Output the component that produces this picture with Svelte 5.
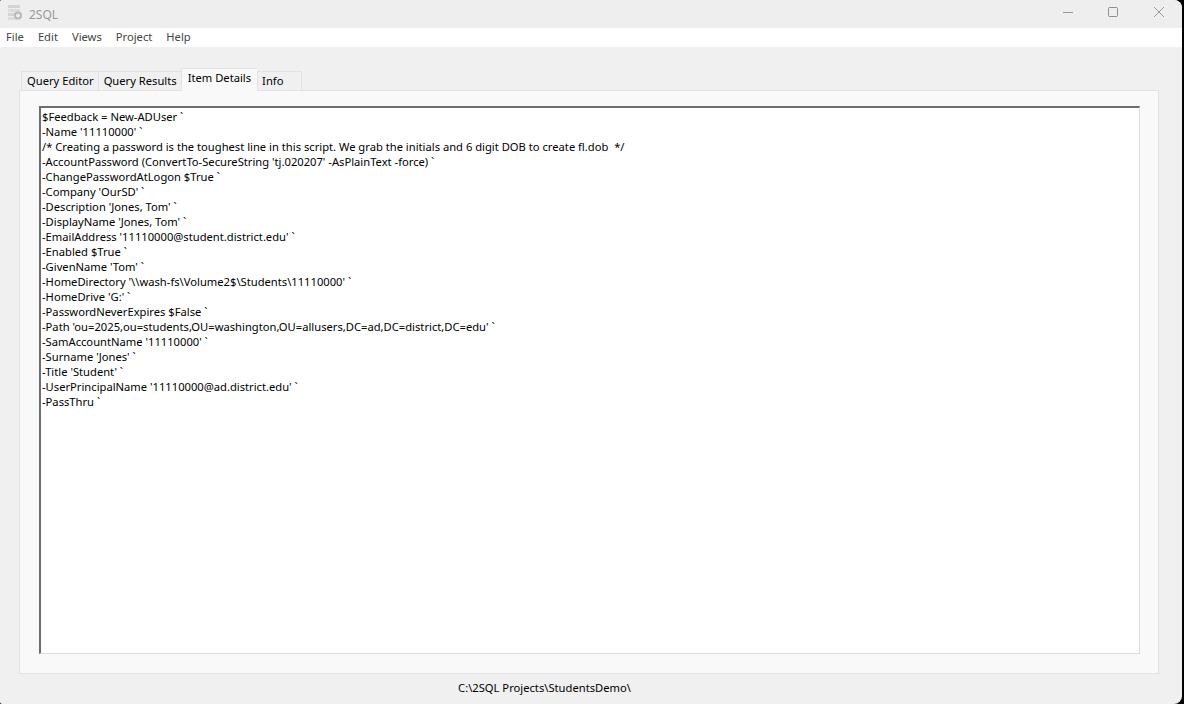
<script lang="ts">
    const menus = ['File', 'Edit', 'Views', 'Project', 'Help'];
    const tabs = ['Query Editor', 'Query Results', 'Item Details', 'Info'];
    let activeTab = $state('Item Details');

    const script = `$Feedback = New-ADUser \`
-Name '11110000' \`
/* Creating a password is the toughest line in this script. We grab the initials and 6 digit DOB to create fl.dob  */
-AccountPassword (ConvertTo-SecureString 'tj.020207' -AsPlainText -force) \`
-ChangePasswordAtLogon $True \`
-Company 'OurSD' \`
-Description 'Jones, Tom' \`
-DisplayName 'Jones, Tom' \`
-EmailAddress '11110000@student.district.edu' \`
-Enabled $True \`
-GivenName 'Tom' \`
-HomeDirectory '\\\\wash-fs\\Volume2$\\Students\\11110000' \`
-HomeDrive 'G:' \`
-PasswordNeverExpires $False \`
-Path 'ou=2025,ou=students,OU=washington,OU=allusers,DC=ad,DC=district,DC=edu' \`
-SamAccountName '11110000' \`
-Surname 'Jones' \`
-Title 'Student' \`
-UserPrincipalName '11110000@ad.district.edu' \`
-PassThru \``;
</script>

<div class="window">
    <header class="titlebar">
        <svg class="app-icon" width="18" height="18" viewBox="0 0 18 18">
            <rect x="1" y="0" width="12" height="3" fill="#d4d4d4" />
            <rect x="1" y="4" width="12" height="3" fill="#dcdcdc" />
            <rect x="1" y="8" width="12" height="3" fill="#d4d4d4" />
            <rect x="1" y="12" width="9" height="3" fill="#dcdcdc" />
            <circle cx="11" cy="10.5" r="4" fill="#b8b8b8" />
            <circle cx="11" cy="10.5" r="2" fill="#ececec" />
        </svg>
        <span class="app-title">2SQL</span>
        <div class="controls">
            <svg class="control" width="46" height="28" viewBox="0 0 46 28"><path d="M19 12.5h10" stroke="#999" fill="none" /></svg>
            <svg class="control" width="46" height="28" viewBox="0 0 46 28"><rect x="18.5" y="7.5" width="9" height="9" rx="1" stroke="#8f8f8f" fill="none" /></svg>
            <svg class="control" width="46" height="28" viewBox="0 0 46 28"><path d="M18 7l10 10M28 7l-10 10" stroke="#999" fill="none" /></svg>
        </div>
    </header>

    <nav class="menubar">
        {#each menus as menu}
            <span class="menu-item">{menu}</span>
        {/each}
    </nav>

    <main class="content">
        <div class="tabs">
            {#each tabs as tab}
                <button class="tab" class:active={tab === activeTab} onclick={() => (activeTab = tab)}>{tab}</button>
            {/each}
        </div>
        <div class="pane">
            <textarea class="editor" readonly spellcheck="false" value={script}></textarea>
        </div>
    </main>

    <footer class="status">C:\2SQL Projects\StudentsDemo\</footer>
</div>

<style>
    :global(body) {
        margin: 0;
        background: #000;
    }

    .window {
        width: 1182px;
        height: 704px;
        display: flex;
        flex-direction: column;
        background: #f0f0f0;
        font-family: 'Noto Sans', 'Open Sans', sans-serif;
        font-size: 11.2px;
        color: #000;
        border-radius: 2px 8px 8px 2px;
        overflow: hidden;
    }

    .titlebar {
        height: 28px;
        flex: none;
        display: flex;
        align-items: center;
        padding-left: 7px;
        background: #eeeeee;
    }

    .app-icon {
        margin-right: 4px;
    }

    .app-title {
        font-size: 12px;
        color: #9a9a9a;
    }

    .controls {
        margin-left: auto;
        display: flex;
    }

    .control {
        display: block;
    }

    .menubar {
        height: 17px;
        padding: 0 0 2px 6px;
        flex: none;
        display: flex;
        align-items: center;
        gap: 14px;
        background: #fff;
        color: #444;
    }

    .content {
        flex: 1;
        min-height: 0;
        display: flex;
        flex-direction: column;
        padding: 22px 23px 0 19px;
    }

    .tabs {
        display: flex;
        height: 21px;
        padding-left: 2px;
        flex: none;
        align-items: flex-end;
    }

    .tab {
        height: 20px;
        padding: 0 4px 2px 5px;
        margin: 0 0 -1px;
        font: inherit;
        color: #000;
        background: #f0f0f0;
        border: 1px solid #e3e3e3;
        border-right-width: 0;
        border-bottom: 0;
    }

    .tab:last-child {
        border-right-width: 1px;
        padding: 0 18px 2px 4px;
    }

    .tab.active {
        height: 23px;
        padding: 0 6px 5px;
        background: #f9f9f9;
        position: relative;
        z-index: 1;
    }

    .pane {
        flex: 1;
        min-height: 0;
        display: flex;
        padding: 15px 18px 19px 19px;
        background: #f9f9f9;
        border: 1px solid #e3e3e3;
    }

    .editor {
        flex: 1;
        display: block;
        margin: 0;
        padding: 1px 0 0 1px;
        resize: none;
        outline: none;
        overflow: hidden;
        font: inherit;
        line-height: 15px;
        color: #000;
        background: #fff;
        border-style: solid;
        border-width: 2px 1px 1px 2px;
        border-color: #6e6e6e #dcdcdc #dcdcdc #6e6e6e;
        white-space: pre;
    }

    .status {
        height: 26px;
        padding-bottom: 4px;
        flex: none;
        display: flex;
        align-items: center;
        justify-content: center;
        padding-right: 93px;
    }
</style>
